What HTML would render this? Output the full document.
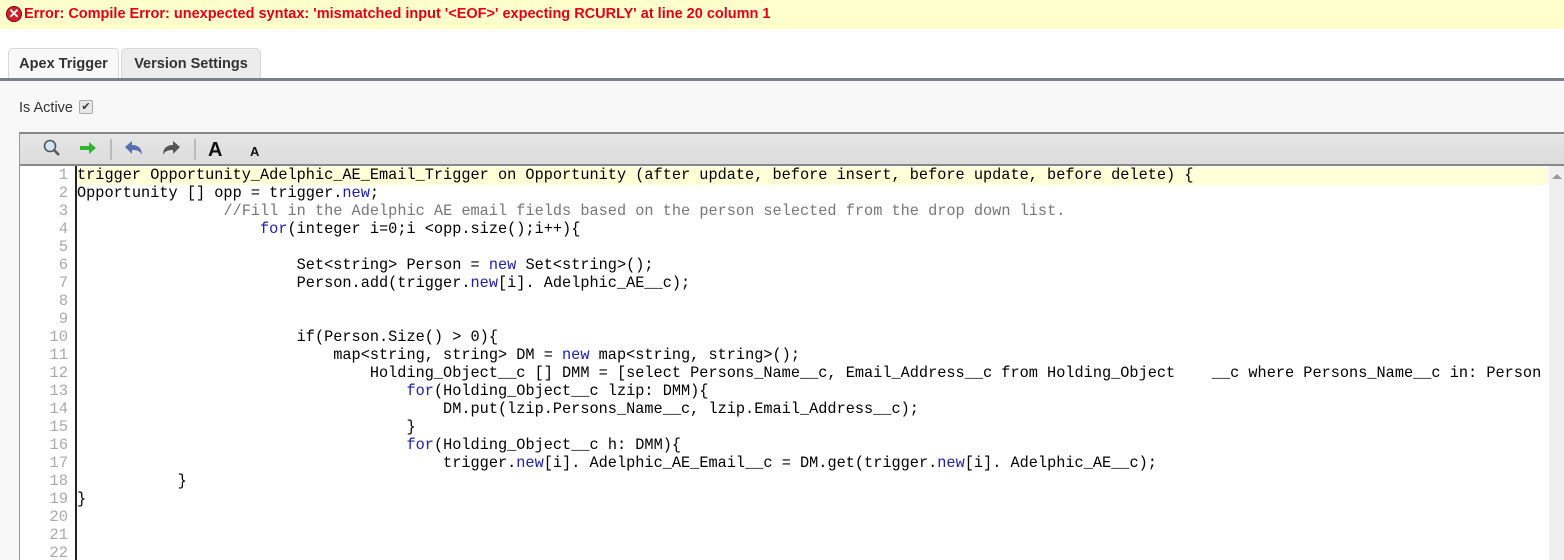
<!DOCTYPE html>
<html><head><meta charset="utf-8"><style>
html,body{margin:0;width:1564px;height:560px;overflow:hidden}
body{background:#f8f8f8;font-family:"Liberation Sans",Arial,sans-serif;position:relative}
.err{position:absolute;left:0;top:0;width:1564px;height:29px;background:#ffffcc;color:#e4001b;font-size:14.5px;font-weight:bold;line-height:29px}
.err .ic{position:absolute;left:6px;top:6px;width:16px;height:16px;border-radius:50%;background:#d0202a;box-shadow:inset 0 0 0 1px #8a0a10;color:#fff;font-size:13px;line-height:16px;text-align:center}
.err span.t{position:absolute;left:24px;top:0}
.top{position:absolute;left:0;top:29px;width:1564px;height:50px;background:#fff}
.tab{position:absolute;top:48px;height:31px;border:1px solid #d8d8d8;border-bottom:none;border-radius:5px 5px 0 0;font-weight:bold;font-size:14.5px;color:#333;line-height:31px;text-align:center;box-sizing:border-box}
.line{position:absolute;left:0;top:78px;width:1564px;height:3px;background:#7a7f8a}
.active{position:absolute;left:19px;top:100px;font-size:14.5px;color:#333}
.cb{position:absolute;left:79px;top:100px;width:12px;height:12px;border:1px solid #aaa;border-radius:2px;background:#e8e8e8;font-size:11px;line-height:12px;text-align:center;color:#333}
.ed{position:absolute;left:19px;top:132px;width:1545px;height:428px;border-left:1px solid #999;border-top:2px solid #888;background:#fff;overflow:hidden}
.tb{position:absolute;left:0;top:0;width:1545px;height:30px;background:linear-gradient(#e6e6e6,#dcdcdc);border-bottom:2px solid #888}
.code{position:absolute;left:0;top:32px;font-family:"Liberation Mono",monospace;font-size:15.25px;line-height:18px;white-space:pre}
.gut{position:absolute;left:0;top:32px;width:55px;height:400px;border-right:2px solid #222;background:#fff}
.ln{position:absolute;left:0;width:48px;text-align:right;color:#aaa;font-family:"Liberation Mono",monospace;font-size:15.5px}
.hl{position:absolute;left:57px;top:33px;width:1471px;height:18px;background:#ffffd8}
.sb{position:absolute;left:1529px;top:32px;width:16px;height:400px;background:#efefef}
.k{color:#2020b0}.c{color:#777}
</style></head><body>
<div class="err"><div class="ic">✕</div><span class="t">Error: Compile Error: unexpected syntax: 'mismatched input '&lt;EOF&gt;' expecting RCURLY' at line 20 column 1</span></div>
<div class="top"></div>
<div class="tab" style="left:8px;width:111px;background:#f8f8f8">Apex Trigger</div>
<div class="tab" style="left:121px;width:140px;background:#ececec">Version Settings</div>
<div class="line"></div>
<div class="active">Is Active</div><div class="cb">✔</div>
<div class="ed">
<div class="tb">
<svg width="260" height="30" style="position:absolute;left:0;top:0">
<circle cx="30" cy="12" r="5.5" fill="#cfe6f7" stroke="#555" stroke-width="1.6"/><line x1="34" y1="16" x2="39" y2="21" stroke="#555" stroke-width="2.5"/>
<path d="M60 12h9v-4l7 6-7 6v-4h-9z" fill="#2db52d"/>
<line x1="91" y1="5" x2="91" y2="26" stroke="#bbb" stroke-width="2"/>
<path d="M105 13l7-6v4c7 0 10 4 10 10-2-4-5-5-10-5v4z" fill="#5a6fb0"/>
<path d="M160 13l-7-6v4c-7 0-10 4-10 10 2-4 5-5 10-5v4z" fill="#555"/>
<line x1="175" y1="5" x2="175" y2="26" stroke="#bbb" stroke-width="2"/>
<text x="188" y="22" font-family="Liberation Sans" font-weight="bold" font-size="20" fill="#111">A</text>
<text x="230" y="22" font-family="Liberation Sans" font-weight="bold" font-size="13" fill="#111">A</text>
</svg></div>
<div class="gut"></div>
<div class="hl"></div>
<div class="sb"><svg width="16" height="16" style="position:absolute;top:2px"><path d="M3 11h10l-5-5z" fill="#999"/></svg></div>
<div class="ln" style="top:32px;line-height:18px">1<br>2<br>3<br>4<br>5<br>6<br>7<br>8<br>9<br>10<br>11<br>12<br>13<br>14<br>15<br>16<br>17<br>18<br>19<br>20<br>21<br>22</div>
<div class="code" style="left:57px">trigger Opportunity_Adelphic_AE_Email_Trigger on Opportunity (after update, before insert, before update, before delete) {
Opportunity [] opp = trigger.<span class="k">new</span>;
                <span class="c">//Fill in the Adelphic AE email fields based on the person selected from the drop down list.</span>
                    <span class="k">for</span>(integer i=0;i &lt;opp.size();i++){

                        Set&lt;string&gt; Person = <span class="k">new</span> Set&lt;string&gt;();
                        Person.add(trigger.<span class="k">new</span>[i]. Adelphic_AE__c);


                        if(Person.Size() &gt; 0){
                            map&lt;string, string&gt; DM = <span class="k">new</span> map&lt;string, string&gt;();
                                Holding_Object__c [] DMM = [select Persons_Name__c, Email_Address__c from Holding_Object    __c where Persons_Name__c in: Person
                                    <span class="k">for</span>(Holding_Object__c lzip: DMM){
                                        DM.put(lzip.Persons_Name__c, lzip.Email_Address__c);
                                    }
                                    <span class="k">for</span>(Holding_Object__c h: DMM){
                                        trigger.<span class="k">new</span>[i]. Adelphic_AE_Email__c = DM.get(trigger.<span class="k">new</span>[i]. Adelphic_AE__c);
           }
}</div>
</div>
</body></html>
